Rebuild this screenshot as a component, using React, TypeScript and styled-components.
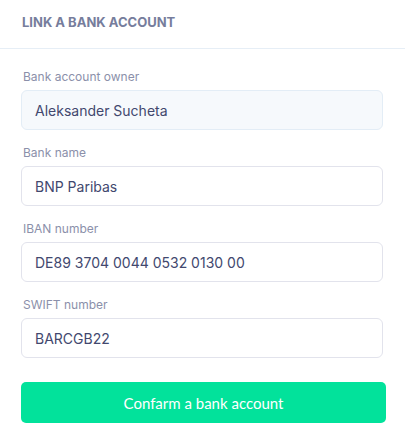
import styled, { createGlobalStyle } from 'styled-components';

const GlobalStyle = createGlobalStyle`
  * {
    box-sizing: border-box;
  }

  body {
    margin: 0;
    background: #ffffff;
    font-family: Inter, 'Noto Sans', sans-serif;
  }
`;

type Field = {
  label: string;
  value: string;
  readOnly?: boolean;
};

const fields: Field[] = [
  { label: 'Bank account owner', value: 'Aleksander Sucheta', readOnly: true },
  { label: 'Bank name', value: 'BNP Paribas' },
  { label: 'IBAN number', value: 'DE89 3704 0044 0532 0130 00' },
  { label: 'SWIFT number', value: 'BARCGB22' },
];

const App = () => {
  return (
    <>
      <GlobalStyle />
      <Panel>
        <Header>
          <Title>Link a bank account</Title>
        </Header>
        <Form onSubmit={(e) => e.preventDefault()}>
          {fields.map((field) => (
            <FieldGroup key={field.label}>
              <Label>{field.label}</Label>
              <Input $locked={field.readOnly} defaultValue={field.value} readOnly={field.readOnly} />
            </FieldGroup>
          ))}
          <SubmitButton type='submit'>Confarm a bank account</SubmitButton>
        </Form>
      </Panel>
    </>
  );
};

const Panel = styled.div`
  width: 405px;
  height: 445px;
  background: #ffffff;
`;

const Header = styled.div`
  display: flex;
  align-items: center;

  height: 49px;
  padding: 0 22px;
  border-bottom: 1px solid #e6eef6;
`;

const Title = styled.h2`
  margin: 0;
  margin-top: -4px;

  font-size: 13px;
  font-weight: 700;
  text-transform: uppercase;
  color: #767d9c;
`;

const Form = styled.form`
  display: flex;
  flex-direction: column;

  padding: 20px 22px 0 21px;
`;

const FieldGroup = styled.div`
  display: flex;
  flex-direction: column;

  margin-bottom: 15px;
`;

const Label = styled.label`
  margin: 0 0 6px 2px;

  font-size: 12px;
  line-height: 15px;
  color: #8b90aa;
`;

const Input = styled.input<{ $locked?: boolean }>`
  width: 362px;
  height: 40px;
  padding: 0 13px;
  border: 1px solid ${({ $locked }) => ($locked ? '#e3edf6' : '#e2e3ec')};
  border-radius: 6px;

  background: ${({ $locked }) => ($locked ? '#f6f9fc' : '#ffffff')};
  font-family: Inter, 'Noto Sans', sans-serif;
  font-size: 14px;
  color: #42486e;
  outline: none;
`;

const SubmitButton = styled.button`
  width: 365px;
  height: 41px;
  margin-top: 9px;
  border: none;
  border-radius: 5px;

  background: #02e29b;
  font-family: Lato, 'Noto Sans', sans-serif;
  font-size: 15px;
  color: #ffffff;
  cursor: pointer;
`;

export default App;
